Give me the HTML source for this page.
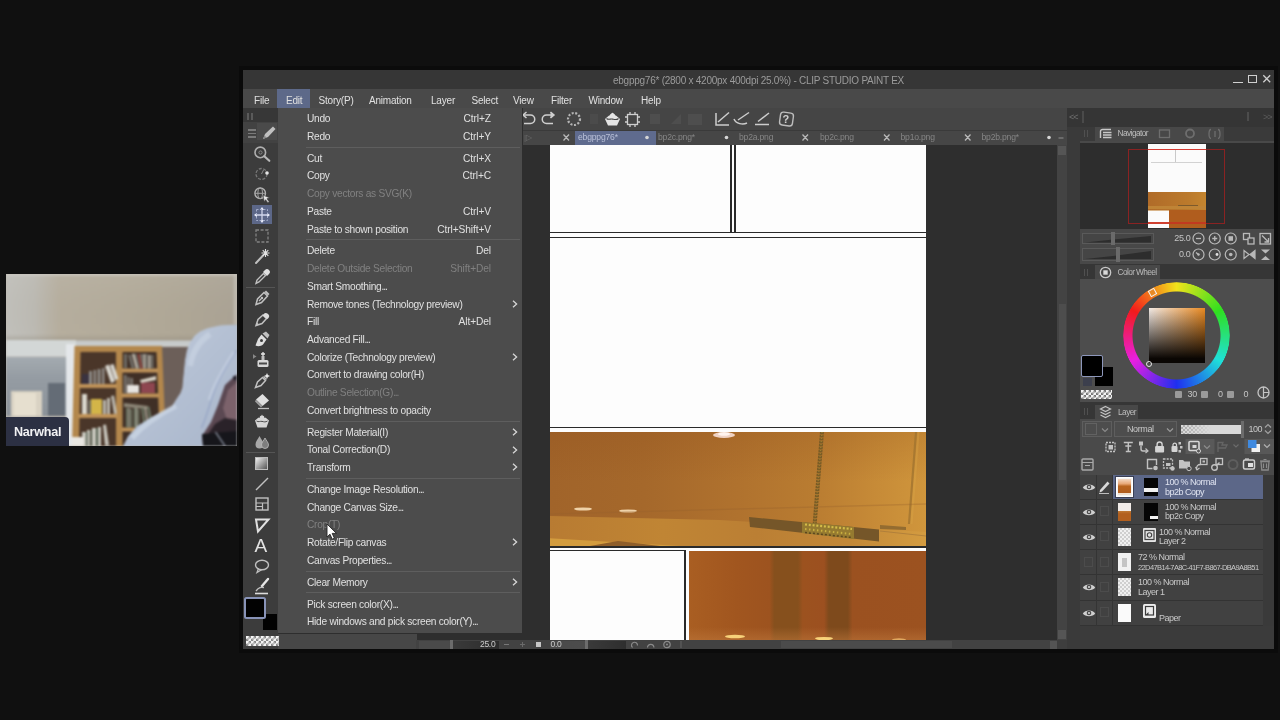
<!DOCTYPE html>
<html><head><meta charset="utf-8"><title>CLIP STUDIO PAINT EX</title>
<style>
*{box-sizing:border-box;margin:0;padding:0}
html,body{width:1280px;height:720px;overflow:hidden;background:#101010;font-family:"Liberation Sans",sans-serif;}
.a,.a *{position:absolute}
.t{white-space:nowrap;letter-spacing:-0.2px}
svg{overflow:visible}
body>.a{left:0;top:0;width:1280px;height:720px}
body>.a{filter:blur(0.4px)}

</style></head><body>
<!-- frame.html -->
<div class="a" id="frame">
<div style="left:239px;top:66px;width:1038.500px;height:587px;background:#0b0b0b"></div>
<div style="left:243px;top:70px;width:1031px;height:579px;background:#3d3d3d"></div>
<div style="left:243px;top:70px;width:1031px;height:19px;background:#363636"></div>
<div class="t" style="left:613px;top:74px;font-size:10px;line-height:14px;color:#9b9b9b;letter-spacing:-0.25px">ebgppg76* (2800 x 4200px 400dpi 25.0%) - CLIP STUDIO PAINT EX</div>
<div style="left:1274px;top:70px;width:3.500px;height:579px;background:#0a0a0a"></div><div style="left:239px;top:70px;width:4px;height:579px;background:#0a0a0a"></div>
<!-- window buttons -->
<div style="left:1232.500px;top:82px;width:10px;height:1.300px;background:#d2d2d2"></div>
<div style="left:1248px;top:74.500px;width:8.500px;height:8.500px;border:1.200px solid #cfcfcf"></div>
<svg style="left:1263px;top:75px" width="7.500" height="7.500" viewBox="0 0 7.500 7.500"><path d="M0.300 0.300L7.200 7.200M7.200 0.300L0.300 7.200" stroke="#cfcfcf" stroke-width="1.300"/></svg>
<!-- menubar -->
<div style="left:243px;top:89px;width:1031px;height:19px;background:#494949"></div>
<div style="left:277px;top:89px;width:33px;height:19px;background:#5d6989"></div>
<div id="mb" style="left:0;top:93.600px;font-size:10px;line-height:14px;color:#e0e0e0">
<span class="t" style="left:254px">File</span><span class="t" style="left:286px">Edit</span><span class="t" style="left:318.5px">Story(P)</span><span class="t" style="left:369px">Animation</span><span class="t" style="left:431px">Layer</span><span class="t" style="left:471.5px">Select</span><span class="t" style="left:513px">View</span><span class="t" style="left:551px">Filter</span><span class="t" style="left:588.5px">Window</span><span class="t" style="left:641px">Help</span>
</div>
<!-- command bar -->
<div style="left:278px;top:108px;width:789px;height:22px;background:#454545"></div>
<!-- tabs row -->
<div style="left:522px;top:130px;width:545px;height:16px;background:#3b3b3b"></div>
<!-- status bar -->
<div style="left:243px;top:634px;width:824px;height:15px;background:#3d3d3d"></div>
</div>

<!-- canvas.html -->
<div class="a" id="canvas">
<div style="left:279px;top:144.500px;width:778px;height:495.500px;background:#2e2e2e"></div>
<!-- paper -->
<div style="left:550px;top:145px;width:376px;height:495px;background:#fdfdfd"></div>
<!-- frame lines top -->
<div style="left:730px;top:145px;width:1.5px;height:87px;background:#2a2a2a"></div>
<div style="left:734px;top:145px;width:1.5px;height:87px;background:#2a2a2a"></div>
<div style="left:550px;top:231.5px;width:376px;height:1.5px;background:#2a2a2a"></div>
<div style="left:550px;top:236.5px;width:376px;height:1.5px;background:#2a2a2a"></div>
<div style="left:550px;top:426.5px;width:376px;height:1.5px;background:#2a2a2a"></div>
<!-- orange image 1 -->
<div style="left:550px;top:432px;width:376px;height:114px;overflow:hidden;background:linear-gradient(90deg,#a1642a 0%,#a5682b 25%,#b0722e 50%,#b97c31 70%,#c68a37 86%,#d0963c 100%)">
 <div style="left:0;top:0;width:376px;height:50px;background:linear-gradient(180deg,rgba(140,75,25,.22),rgba(140,75,25,0))"></div>
 <div style="left:0;top:76px;width:376px;height:38px;background:linear-gradient(90deg,#b87b32 0%,#c08534 30%,#bb7f34 55%,#c28838 80%,#d49c40 100%);clip-path:polygon(0 8px,45% 12px,100% 24px,100% 100%,0 100%)"></div>
 <div style="left:0;top:102px;width:130px;height:12px;background:#d39c3e;clip-path:polygon(0 35%,100% 100%,0 100%)"></div>
 <div style="left:40px;top:109px;width:70px;height:5px;background:#8f5e2a;clip-path:polygon(0 100%,40% 0,100% 100%)"></div>
 <svg style="left:0;top:0" width="376" height="114" viewBox="0 0 376 114">
  <ellipse cx="174" cy="3" rx="11" ry="3" fill="#f0d3c4"/>
  <ellipse cx="174" cy="2" rx="6" ry="1.800" fill="#fff4ee"/>
  <path d="M272 0L264.500 94" stroke="#7a5c26" stroke-width="4" stroke-dasharray="2.400 0.600"/>
  <path d="M272 0L264.500 94" stroke="#9c7c30" stroke-width="1.400" stroke-dasharray="1 2"/>
  <path d="M366 0L359 92" stroke="#a27530" stroke-width="2.200" opacity=".8"/><path d="M368.500 0L361.500 92" stroke="#dba848" stroke-width="2" opacity=".35"/>
  <path d="M199 85L329 97.500L329 109.500L200 95Z" fill="#755629"/>
  <path d="M252 90L304 95L304 107L252 101Z" fill="#957a30"/>
  <path d="M255 92.500L302 97" stroke="#d4bc48" stroke-width="2.200" stroke-dasharray="2 1.800"/>
  <path d="M255 97L302 102" stroke="#c9b040" stroke-width="2" stroke-dasharray="1.500 2.500"/>
  <path d="M255 100.500L302 105.500" stroke="#5c4720" stroke-width="1.500" stroke-dasharray="2 2"/>
  <path d="M330 93L356 95L356 98L330 97Z" fill="#946c30"/>
  <path d="M330 99L376 104" stroke="#a6783a" stroke-width="1.200" opacity=".7"/>
  <ellipse cx="33" cy="77" rx="9" ry="1.600" fill="#efd2a8"/>
  <ellipse cx="78" cy="79" rx="9" ry="1.600" fill="#efd2a8"/>
  <path d="M0 82L376 72" stroke="#96602b" stroke-width="1.500" opacity=".3"/>
 </svg>
</div>
<div style="left:550px;top:546px;width:376px;height:1.5px;background:#2a2a2a"></div>
<div style="left:550px;top:550px;width:136px;height:1.2px;background:#2a2a2a"></div>
<div style="left:684px;top:550px;width:1.6px;height:90px;background:#2a2a2a"></div>
<!-- orange image 2 -->
<div style="left:689px;top:550.5px;width:237px;height:89.5px;overflow:hidden;background:linear-gradient(90deg,#a95e22 0%,#a1561f 20%,#9d531f 34%,#86501d 36%,#86501d 46%,#9c521f 48%,#9c5020 57%,#7e4a1c 59%,#7e4a1c 67%,#9b5120 69%,#9c5220 100%)">
 <div style="left:0;top:76px;width:237px;height:14px;background:linear-gradient(180deg,rgba(190,120,60,0),rgba(190,120,60,.55))"></div>
 <svg style="left:0;top:0" width="237" height="90" viewBox="0 0 237 90">
  <ellipse cx="46" cy="85.5" rx="10" ry="1.8" fill="#f7d27a"/>
  <ellipse cx="135" cy="87.5" rx="9" ry="1.6" fill="#f7d27a"/>
  <ellipse cx="210" cy="88.5" rx="7" ry="1.2" fill="#e0a860"/>
 </svg>
</div>
<!-- scrollbars -->
<div style="left:1057px;top:144.500px;width:10px;height:495.500px;background:#434343"></div>
<div style="left:1058px;top:145.500px;width:8px;height:9px;background:#555"></div>
<div style="left:1058.500px;top:304px;width:7px;height:176px;background:#4d4d4d"></div>
<div style="left:1058px;top:630px;width:8px;height:9px;background:#555"></div>
</div>

<!-- cmd.html -->
<div class="a" id="cmd">
<!-- cmd icons -->
<svg style="left:520px;top:110px" width="280" height="18" viewBox="0 0 280 18">
 <g fill="none" stroke="#cfcfcf" stroke-width="1.500">
  <path d="M4 5h6.500a4 4 0 0 1 0 8.500H4"/><path d="M6.500 2L3 5l3.500 3" />
  <path d="M33 5h-6.500a4 4 0 0 0 0 8.500H33"/><path d="M30.500 2L34 5l-3.500 3" fill="#cfcfcf"/>
 </g>
 <circle cx="54" cy="9" r="6" fill="none" stroke="#b5b5b5" stroke-width="2.200" stroke-dasharray="2 1.600"/>
 <rect x="70" y="4" width="8" height="10" fill="#4b4b4b"/>
 <path d="M85 9L92.500 2.500l7.500 6.500l-3 6.500h-9Z" fill="#e4e4e4"/><path d="M86.500 8.500c2 1.600 4 .2 6 .6s4 1.200 6-.6" fill="none" stroke="#454545" stroke-width="1.100"/><path d="M89 5.500a3.500 3.500 0 0 1 7 0" fill="none" stroke="#454545" stroke-width="1"/>
 <g stroke="#cfcfcf" stroke-width="1.300" fill="none"><rect x="107.500" y="4.500" width="10" height="10"/><path d="M105 7h2.500M117.500 7h2.500M105 12h2.500M117.500 12h2.500M110 2v2.500M115 2v2.500M110 14.500v2.500M115 14.500v2.500"/></g>
 <g fill="#4e4e4e"><rect x="130" y="4" width="10" height="10"/><path d="M151 14l10-10v10Z"/><rect x="168" y="4" width="14" height="11"/></g>
 <g stroke="#cdcdcd" stroke-width="1.500" fill="none">
  <path d="M196 3v12h13"/><path d="M198 12L209 2.500"/>
  <path d="M214 9c2 5 9 6 13 4"/><path d="M218 10L229 2.500"/>
  <path d="M235 14.500h14"/><path d="M238 11.500L249 3"/>
 </g>
 <rect x="260" y="2.500" width="13" height="13" rx="3" fill="none" stroke="#bdbdbd" stroke-width="1.400" transform="rotate(8 266 9)"/>
</svg>
<div class="t" style="left:782.500px;top:112px;font-size:11px;line-height:14px;color:#d0d0d0;font-weight:bold;letter-spacing:0">?</div>
<!-- right end of cmd bar -->
<div style="left:1067px;top:108px;width:207px;height:19px;background:#353535"></div>
<div style="left:1067px;top:127px;width:13px;height:522px;background:#3a3a3a"></div>
<div class="t" style="left:1069px;top:110px;font-size:9px;line-height:14px;color:#6f6f6f;letter-spacing:-1px">&lt;&lt;</div>
<div class="t" style="left:1263px;top:110px;font-size:9px;line-height:14px;color:#5c5c5c;letter-spacing:-1px">&gt;&gt;</div>
<div style="left:1082px;top:111px;width:2px;height:12px;background:#4a4a4a"></div>
<div style="left:1247px;top:112px;width:1.500px;height:9px;background:#4c4c4c"></div>
<!-- tabs -->
<div style="left:522px;top:130px;width:545px;height:14.500px;background:#464646"></div>
<div style="left:522px;top:130px;width:545px;height:1px;background:#3a3a3a"></div>
<div style="left:575px;top:130.500px;width:80.500px;height:14px;background:#5f6b8e"></div>
<div id="tabt" style="left:0;top:131px;font-size:8.600px;line-height:13px;color:#858585">
<span class="t" style="left:524px;color:#6a6a6a;font-size:8px">|▷</span>
<span class="t" style="left:578px;color:#b9c0d8">ebgppg76*</span>
<span class="t" style="left:658px">bp2c.png*</span>
<span class="t" style="left:739px">bp2a.png</span>
<span class="t" style="left:820px">bp2c.png</span>
<span class="t" style="left:900.500px">bp1o.png</span>
<span class="t" style="left:981.500px">bp2b.png*</span>
</div>
<svg style="left:522px;top:129.700px" width="545" height="16" viewBox="0 0 545 16">
 <g stroke="#b8b8b8" stroke-width="1.300"><path d="M41.500 4.500l5.500 6M47 4.500l-5.500 6M280.500 4.500l5.500 6M286 4.500l-5.500 6M362 4.500l5.500 6M367.500 4.500l-5.500 6M443 4.500l5.500 6M448.500 4.500l-5.500 6"/></g>
 <g fill="#d6d6d6"><circle cx="125" cy="7.500" r="1.800"/><circle cx="204.500" cy="7.500" r="1.800"/><circle cx="527" cy="7.500" r="1.800"/></g>
 <path d="M536.500 8h5" stroke="#808080" stroke-width="1.300"/>
</svg>
</div>

<!-- status.html -->
<div class="a" id="status">
<div style="left:277.500px;top:633px;width:139px;height:16px;background:#474747"></div>
<div style="left:416px;top:639.500px;width:651px;height:9.500px;background:#424242"></div>
<div style="left:781px;top:640.500px;width:171px;height:7.500px;background:#4b4b4b"></div>
<div style="left:418.500px;top:640.500px;width:80px;height:8px;background:linear-gradient(90deg,#4a4a4a 0,#4a4a4a 38%,#3a3a3a 42%,#2c2c2c 100%)"></div>
<div style="left:450px;top:640px;width:2.500px;height:9px;background:#6c6c6c"></div>
<div class="t" style="left:480px;top:638.500px;font-size:8.500px;line-height:11px;color:#cdcdcd;letter-spacing:-0.300px">25.0</div>
<div style="left:503.500px;top:644px;width:5px;height:1.300px;background:#777"></div>
<div style="left:520px;top:644px;width:5px;height:1.300px;background:#6a6a6a"></div><div style="left:521.850px;top:642px;width:1.300px;height:5px;background:#6a6a6a"></div>
<div style="left:536px;top:642px;width:5px;height:5px;background:#c6c6c6"></div>
<div style="left:549.500px;top:640.500px;width:76px;height:8px;background:linear-gradient(90deg,#4a4a4a 0,#4c4c4c 46%,#3a3a3a 50%,#2e2e2e 100%)"></div>
<div style="left:585px;top:640px;width:2.500px;height:9px;background:#6c6c6c"></div>
<div class="t" style="left:550.500px;top:638.500px;font-size:8.500px;line-height:11px;color:#cdcdcd;letter-spacing:-0.300px">0.0</div>
<svg style="left:628px;top:640px" width="60" height="9" viewBox="0 0 60 9"><g fill="none" stroke="#8a8a8a" stroke-width="1.200"><path d="M4.500 7.500a3 3 0 1 1 5 -2"/><path d="M19.500 7.500a3.200 3.200 0 1 1 6.400 0"/><circle cx="39" cy="4.500" r="3.200"/></g><circle cx="39" cy="4.500" r="1" fill="#8a8a8a"/><path d="M53 1v7" stroke="#5c5c5c" stroke-width="1.300"/></svg>
<div style="left:1049.500px;top:640.500px;width:7.500px;height:8px;background:#545454"></div>
<div style="left:1057px;top:639.500px;width:10px;height:9.500px;background:#3e3e3e"></div>
</div>

<!-- tools.html -->
<div class="a" id="tools">
<div style="left:243px;top:108px;width:34.5px;height:541px;background:#3c3c3c"></div>
<div style="left:243px;top:108px;width:34.5px;height:14px;background:#373737"></div>
<div style="left:247px;top:113px;width:2px;height:7px;background:#5a5a5a"></div><div style="left:250.5px;top:113px;width:2px;height:7px;background:#5a5a5a"></div>
<div style="left:243px;top:122px;width:34.5px;height:21px;background:#424242"></div>
<div style="left:257px;top:123px;width:20px;height:17px;background:#4a4a4a"></div>
<div style="left:248px;top:129px;width:8px;height:1.5px;background:#7a7a7a"></div><div style="left:248px;top:132.5px;width:8px;height:1.5px;background:#7a7a7a"></div><div style="left:248px;top:136px;width:8px;height:1.5px;background:#7a7a7a"></div>
<svg style="left:259.5px;top:124.0px" width="18" height="18" viewBox="0 0 18 18"><path d="M3 15L5 10L13 2.5L15.5 5L8 13Z" fill="#c0c0c0"/><path d="M3 15L4.5 11.5L6.5 13.5Z" fill="#888"/></svg>
<svg style="left:253.0px;top:145.0px" width="18" height="18" viewBox="0 0 18 18"><circle cx="7.300" cy="7.400" r="5.300" fill="none" stroke="#aeaeae" stroke-width="1.600"/><path d="M11.300 11.300L16.300 15.800" stroke="#b8b8b8" stroke-width="2.200" stroke-linecap="round"/><circle cx="7.5" cy="7.5" r="1.6" fill="none" stroke="#8a8a8a" stroke-width="1"/></svg>
<svg style="left:253.0px;top:165.0px" width="18" height="18" viewBox="0 0 18 18"><circle cx="8.5" cy="9" r="5.5" fill="none" stroke="#787878" stroke-width="1.3" stroke-dasharray="3 1.5"/><circle cx="14" cy="8" r="1.8" fill="#e6e6e6"/><path d="M8.5 9L10.5 5" stroke="#8a8a8a" stroke-width="1"/></svg>
<svg style="left:253.0px;top:185.0px" width="18" height="18" viewBox="0 0 18 18"><circle cx="7.200" cy="8.300" r="5.300" fill="none" stroke="#b4b4b4" stroke-width="1.400"/><ellipse cx="7.200" cy="8.300" rx="2.300" ry="5.300" fill="none" stroke="#a4a4a4" stroke-width="1"/><path d="M2 8.300h10.400" stroke="#a4a4a4" stroke-width="1"/><path d="M10.200 10.200l6.300 2.600l-2.600 1l2.300 3l-1.300 1l-2.300-3.100l-1.500 1.900Z" fill="#e6e6e6" stroke="#404040" stroke-width=".6"/></svg>
<div style="left:252px;top:205px;width:20px;height:19px;background:#5c6788"></div>
<svg style="left:253.0px;top:205.5px" width="18" height="18" viewBox="0 0 18 18"><path d="M9 2v14M2 9h14" stroke="#cfd5ea" stroke-width="1.3"/><path d="M9 1l2.2 3h-4.4ZM9 17l2.2-3h-4.4ZM1 9l3-2.2v4.4ZM17 9l-3-2.2v4.4Z" fill="#e4e8f6"/><rect x="3.5" y="3.5" width="11" height="11" fill="none" stroke="#aab3d0" stroke-width=".9" stroke-dasharray="2 1.5"/></svg>
<svg style="left:253.0px;top:226.5px" width="18" height="18" viewBox="0 0 18 18"><rect x="3" y="3" width="12" height="12" fill="none" stroke="#828282" stroke-width="1.3" stroke-dasharray="3 1.6"/></svg>
<svg style="left:253.0px;top:247.0px" width="18" height="18" viewBox="0 0 18 18"><path d="M3 16L10.5 8" stroke="#c0c0c0" stroke-width="2" stroke-linecap="round"/><path d="M12.5 2v8M8.5 6h8M9.7 3.2l5.6 5.6M15.3 3.2l-5.6 5.6" stroke="#e2e2e2" stroke-width="1.1"/></svg>
<svg style="left:253.0px;top:267.5px" width="18" height="18" viewBox="0 0 18 18"><path d="M3 15.5L4 12L10.5 5.5L12.5 7.5L6 14Z" fill="none" stroke="#c0c0c0" stroke-width="1.4"/><path d="M10 4l4 4l2-2a2.4 2.4 0 0 0-4-4Z" fill="#e0e0e0"/></svg>
<div style="left:246px;top:287px;width:29px;height:1px;background:#555"></div>
<svg style="left:253.0px;top:289.0px" width="18" height="18" viewBox="0 0 18 18"><path d="M3 15.5L4.5 10L11 3.5L14.5 7L8.5 13.5Z" fill="none" stroke="#c0c0c0" stroke-width="1.5"/><path d="M6 12l3-3" stroke="#c0c0c0" stroke-width="1.2"/><circle cx="9" cy="9" r="1.2" fill="#c0c0c0"/><path d="M11.5 3L13 1.5L16.5 5L15 6.5Z" fill="#c0c0c0"/></svg>
<svg style="left:253.0px;top:309.5px" width="18" height="18" viewBox="0 0 18 18"><path d="M3 15.5L5 9.5L10 5L13.5 8.5L9 13.5Z" fill="none" stroke="#c0c0c0" stroke-width="1.5"/><path d="M10.5 4.5a3 3 0 0 1 5 3.5l-1.5 1.2l-4.5-4Z" fill="#dcdcdc"/><path d="M3 15.5l1-3l2 2Z" fill="#c0c0c0"/></svg>
<svg style="left:253.0px;top:330.0px" width="18" height="18" viewBox="0 0 18 18"><path d="M9.5 3.5L13 1.5L16.5 5L14.5 8.5Z" fill="#c0c0c0"/><path d="M8.5 4.5L13.5 9.5L10 14.5C8 16.5 4.5 16.5 2.5 15.5L5 9Z" fill="#dedede"/><circle cx="8.5" cy="10.5" r="1.5" fill="#3c3c3c"/></svg>
<svg style="left:253.0px;top:351.0px" width="18" height="18" viewBox="0 0 18 18"><rect x="4.5" y="9" width="11" height="7" rx="1.5" fill="#d8d8d8"/><rect x="6" y="11.5" width="8" height="2" fill="#4a4a4a"/><rect x="8.5" y="5" width="3" height="4" fill="#c0c0c0"/><path d="M10 1v4M8 3h4" stroke="#e8e8e8" stroke-width="1.3"/><path d="M1 4l2.5 1.5L1 7Z" fill="#8a8a8a"/><path d="M0.5 3.5v4" stroke="#8a8a8a" stroke-width="1"/></svg>
<svg style="left:253.0px;top:371.5px" width="18" height="18" viewBox="0 0 18 18"><path d="M2.5 15.5L4.5 10L9.5 5.5L12.5 8.5L8 13.5Z" fill="none" stroke="#c0c0c0" stroke-width="1.5"/><path d="M10.5 4.5l3 3" stroke="#c0c0c0" stroke-width="1.5"/><path d="M14 1l.9 2.1L17 4l-2.1.9L14 7l-.9-2.1L11 4l2.100-.9Z" fill="#eaeaea"/></svg>
<svg style="left:253.0px;top:391.5px" width="18" height="18" viewBox="0 0 18 18"><path d="M9.500 2L16 8.500L9.500 14L3 7.500Z" fill="#e0e0e0"/><path d="M3 7.500L9.500 14L8 15.500L2 9.500Z" fill="#9c9c9c"/><path d="M5 16.500h11" stroke="#c0c0c0" stroke-width="1.3"/></svg>
<svg style="left:253.0px;top:412.0px" width="18" height="18" viewBox="0 0 18 18"><path d="M2 8.500L9 2.500l7 6l-2.500 7H4.500Z" fill="#d6d6d6"/><path d="M6 6a3 3.200 0 0 1 6 0" fill="none" stroke="#404040" stroke-width="1.100"/><path d="M3.500 9c2 1.400 3.600 0 5.500.400s3.600 1 5.500-.400" fill="none" stroke="#404040" stroke-width=".9"/></svg>
<svg style="left:253.0px;top:432.5px" width="18" height="18" viewBox="0 0 18 18"><path d="M6.500 3C8 6 10.500 8.500 10.500 11.500a4 4 0 0 1-8 0C2.500 8.500 5 6 6.500 3Z" fill="#a8a8a8"/><path d="M12 5c1.200 2.500 3.500 4.500 3.500 7a3.500 3.500 0 0 1-7 0c0-2.500 2.300-4.500 3.500-7Z" fill="#7e7e7e" stroke="#bdbdbd" stroke-width=".8"/></svg>
<div style="left:246px;top:452px;width:29px;height:1px;background:#555"></div>
<div style="left:255px;top:456.500px;width:13px;height:13px;background:linear-gradient(135deg,#f0f0f0,#555);border:1px solid #bdbdbd"></div>
<svg style="left:253.0px;top:474.5px" width="18" height="18" viewBox="0 0 18 18"><path d="M3 15L15 3" stroke="#c0c0c0" stroke-width="1.500"/></svg>
<svg style="left:253.0px;top:495.0px" width="18" height="18" viewBox="0 0 18 18"><rect x="3" y="3" width="12" height="12" fill="none" stroke="#c0c0c0" stroke-width="1.400"/><path d="M3 8h12M9.500 8v7M3 11.500h6.500" stroke="#c0c0c0" stroke-width="1.200"/></svg>
<svg style="left:253.0px;top:515.5px" width="18" height="18" viewBox="0 0 18 18"><path d="M3 3.500h12.500L5 15.500Z" fill="none" stroke="#e0e0e0" stroke-width="2"/></svg>
<div class="t" style="left:254.500px;top:536px;font-size:19px;line-height:19px;color:#e4e4e4;letter-spacing:0">A</div>
<svg style="left:253.0px;top:556.5px" width="18" height="18" viewBox="0 0 18 18"><ellipse cx="9" cy="8" rx="6.500" ry="4.800" fill="none" stroke="#c0c0c0" stroke-width="1.400"/><path d="M5.500 11.500L4 15.500L9 12.500" fill="none" stroke="#c0c0c0" stroke-width="1.300"/></svg>
<svg style="left:253.0px;top:576.5px" width="18" height="18" viewBox="0 0 18 18"><path d="M9 9L15 2" stroke="#e6e6e6" stroke-width="2.400" stroke-linecap="round"/><path d="M3 14c3-4 5-4 8-3.500" fill="none" stroke="#c0c0c0" stroke-width="1.300"/><path d="M2 16.500h13" stroke="#dcdcdc" stroke-width="1.600"/></svg>
<div style="left:263px;top:613.500px;width:14px;height:16.500px;background:#020202"></div>
<div style="left:244px;top:596.500px;width:21.500px;height:22px;background:#020202;border:2px solid #8893b8;border-radius:2.500px"></div>
<div style="left:246px;top:636px;width:33px;height:9.500px;background-color:#f4f4f4;background-image:linear-gradient(45deg,#8a8a8a 25%,transparent 25%,transparent 75%,#8a8a8a 75%),linear-gradient(45deg,#8a8a8a 25%,transparent 25%,transparent 75%,#8a8a8a 75%);background-size:5px 5px;background-position:0 0,2.500px 2.500px"></div>
</div>

<!-- right.html -->
<div class="a" id="right">
<div style="left:1080px;top:127px;width:194px;height:522px;background:#3a3a3a"></div>
<div style="left:1095px;top:126.500px;width:129px;height:14px;background:#484848"></div>
<div style="left:1080px;top:140.500px;width:194px;height:2.500px;background:#494949"></div>
<div style="left:1080px;top:143px;width:194px;height:85.500px;background:#2d2d2d"></div>
<div style="left:1084px;top:130px;width:4px;height:7px;border-left:1.500px solid #505050;border-right:1.500px solid #505050"></div>
<svg style="left:1099px;top:127.500px" width="14" height="12" viewBox="0 0 14 12"><path d="M1.500 10V3.500a2 2 0 0 1 2-2H12" fill="none" stroke="#c8c8c8" stroke-width="1.400"/><path d="M4 4.500h8.500M4 7h8.500M4 9.500h8.500" stroke="#c8c8c8" stroke-width="1.300"/></svg>
<div class="t" style="left:1117.500px;top:127px;font-size:8.300px;line-height:13px;color:#bdbdbd;letter-spacing:-0.550px">Navigator</div>
<svg style="left:1158px;top:128px" width="66" height="12" viewBox="0 0 66 12"><rect x="1.500" y="2" width="10" height="7.500" fill="none" stroke="#6e6e6e" stroke-width="1.300"/><circle cx="32" cy="5.500" r="4" fill="none" stroke="#6e6e6e" stroke-width="1.800"/><path d="M53 1.500c-2 0-2 4-2 4.500s0 4.500 2 4.500M60 1.500c2 0 2 4 2 4.500s0 4.500-2 4.500M57 3v6" fill="none" stroke="#6e6e6e" stroke-width="1.300"/></svg>
<div style="left:1148px;top:143.500px;width:57.500px;height:84.500px;background:#fbfbfb"></div>
<div style="left:1175px;top:149px;width:1px;height:13px;background:#c9c9c9"></div>
<div style="left:1151px;top:161.500px;width:51px;height:1px;background:#d2d2d2"></div>
<div style="left:1148px;top:191.500px;width:57.500px;height:18px;background:linear-gradient(90deg,#b06b28,#bb7a2c 70%,#c4852f)"></div>
<div style="left:1148px;top:205.500px;width:57.500px;height:3.500px;background:#bf8436"></div><div style="left:1178px;top:204.500px;width:20px;height:1.800px;background:#7d5a2c"></div>
<div style="left:1169px;top:209.500px;width:36.500px;height:18.500px;background:#b05d1e"></div>
<div style="left:1148px;top:209.500px;width:21px;height:1px;background:#d9b58a"></div>
<div style="left:1128px;top:148.500px;width:97px;height:75px;border:1.200px solid #8a2222"></div>
<div style="left:1148px;top:148.500px;width:57.500px;height:1.400px;background:#d63a32"></div>
<div style="left:1148px;top:222.300px;width:21px;height:1.300px;background:#d04030"></div><div style="left:1169px;top:222.300px;width:36.500px;height:1.300px;background:#c23a20"></div>
<div style="left:1080px;top:228.500px;width:194px;height:35.500px;background:#484848"></div>
<div style="left:1082px;top:232.5px;width:72px;height:11.5px;background:#454545;border:1px solid #5a5a5a"></div>
<svg style="left:1083px;top:233.5px" width="70" height="9.5" viewBox="0 0 70 9.5" preserveAspectRatio="none"><path d="M2 8.5L30 5.5L68 2V8.5Z" fill="#2d2d2d"/></svg>
<div style="left:1111.0px;top:231.5px;width:3.500px;height:13.5px;background:#6a6a6a"></div>
<div style="left:1082px;top:247.5px;width:72px;height:13px;background:#454545;border:1px solid #5a5a5a"></div>
<svg style="left:1083px;top:248.5px" width="70" height="11" viewBox="0 0 70 11" preserveAspectRatio="none"><path d="M2 10L30 7L68 2V10Z" fill="#2d2d2d"/></svg>
<div style="left:1116.0px;top:246.5px;width:3.500px;height:15px;background:#6a6a6a"></div>
<div class="t" style="right:89.500px;top:232px;font-size:9px;line-height:13px;color:#c4c4c4;letter-spacing:-0.300px">25.0</div>
<div class="t" style="right:89.500px;top:248px;font-size:9px;line-height:13px;color:#c4c4c4;letter-spacing:-0.300px">0.0</div>
<svg style="left:1190px;top:230px" width="84" height="34" viewBox="0 0 84 34"><circle cx="8.5" cy="8.5" r="5.500" fill="none" stroke="#b9b9b9" stroke-width="1.200"/><circle cx="24.75" cy="8.5" r="5.500" fill="none" stroke="#b9b9b9" stroke-width="1.200"/><circle cx="40.75" cy="8.5" r="5.500" fill="none" stroke="#b9b9b9" stroke-width="1.200"/><circle cx="8.5" cy="24.5" r="5.500" fill="none" stroke="#b9b9b9" stroke-width="1.200"/><circle cx="24.75" cy="24.5" r="5.500" fill="none" stroke="#b9b9b9" stroke-width="1.200"/><circle cx="40.75" cy="24.5" r="5.500" fill="none" stroke="#b9b9b9" stroke-width="1.200"/><path d="M6 8.500h5" stroke="#b9b9b9" stroke-width="1.300"/><path d="M22.250 8.500h5M24.750 6v5" stroke="#b9b9b9" stroke-width="1.300"/><rect x="38.500" y="6.200" width="4.500" height="4.600" fill="#b9b9b9"/><rect x="53.500" y="3.500" width="6" height="6" fill="none" stroke="#b9b9b9" stroke-width="1.300"/><rect x="58" y="8" width="6" height="6" fill="#484848" stroke="#b9b9b9" stroke-width="1.300"/><rect x="70" y="3.500" width="10.500" height="10.500" fill="none" stroke="#b9b9b9" stroke-width="1.300"/><path d="M72 5.500l6.500 6.500M78.500 8v4h-4" stroke="#b9b9b9" stroke-width="1.300" fill="none"/><path d="M6 22.500l3 2.500" stroke="#b9b9b9" stroke-width="1.300"/><circle cx="8.500" cy="24.500" r="1.200" fill="#b9b9b9"/><circle cx="27" cy="24.500" r="1.400" fill="#e0e0e0"/><circle cx="40.750" cy="24.500" r="1.800" fill="#b9b9b9"/><path d="M54 20.500l5 4l-5 4ZM65 20.500l-5 4l5 4Z" fill="none" stroke="#b9b9b9" stroke-width="1.200"/><path d="M65 20.500l-5 4l5 4Z" fill="#b9b9b9"/><path d="M71 19.500h9l-4.500 4ZM71 30h9l-4.500-4Z" fill="#b9b9b9"/></svg>
<div style="left:1080px;top:264px;width:194px;height:15px;background:#363636"></div>
<div style="left:1095px;top:265px;width:65px;height:14px;background:#484848"></div>
<div style="left:1084px;top:268.500px;width:4px;height:7px;border-left:1.500px solid #505050;border-right:1.500px solid #505050"></div>
<svg style="left:1099px;top:265.500px" width="13" height="13" viewBox="0 0 13 13"><circle cx="6.500" cy="6.500" r="5.200" fill="none" stroke="#c8c8c8" stroke-width="1.300"/><rect x="4.300" y="4.300" width="4.400" height="4.400" fill="#d8d8d8"/></svg>
<div class="t" style="left:1117.500px;top:265.500px;font-size:8.300px;line-height:13px;color:#bdbdbd;letter-spacing:-0.600px">Color Wheel</div>
<div style="left:1080px;top:279px;width:194px;height:123px;background:#4d4d4d"></div>
<div style="left:1123px;top:282px;width:107px;height:107px;border-radius:50%;background:conic-gradient(from -60deg,#f21b1b,#f2e21b 16.660%,#2fe01f 33.330%,#1fe0d8 50%,#1f2ff0 66.660%,#e81fe0 83.330%,#f21b1b);-webkit-mask:radial-gradient(circle,transparent 43.500px,#000 44.500px,#000 52.800px,transparent 53.800px);mask:radial-gradient(circle,transparent 43.500px,#000 44.500px,#000 52.800px,transparent 53.800px)"></div>
<div style="left:1149px;top:308px;width:56px;height:55px;background:linear-gradient(180deg,rgba(0,0,0,0) 0%,#0a0603 92%),linear-gradient(90deg,#f3ebe6,#e98a22)"></div>
<div style="left:1148.500px;top:289px;width:7px;height:7px;border:1.200px solid #f4f4f4;background:#e88a26;transform:rotate(-29deg)"></div>
<div style="left:1145.500px;top:360.500px;width:6px;height:6px;border:1.200px solid #e8e8e8;border-radius:50%"></div>
<div style="left:1094.500px;top:367px;width:18px;height:18.500px;background:#000"></div>
<div style="left:1080.500px;top:355px;width:22px;height:21.500px;background:#000;border:1.800px solid #8d97bb;border-radius:2px"></div>
<div style="left:1083px;top:378px;width:9px;height:8px;background:#3c3f4d"></div>
<div style="left:1081px;top:390px;width:31px;height:9px;background-color:#f4f4f4;background-image:linear-gradient(45deg,#777 25%,transparent 25%,transparent 75%,#777 75%),linear-gradient(45deg,#777 25%,transparent 25%,transparent 75%,#777 75%);background-size:5px 5px;background-position:0 0,2.500px 2.500px"></div>
<div style="left:1175px;top:391px;width:7px;height:7px;background:#9a9a9a;border-radius:1px"></div><div style="left:1201px;top:391px;width:7px;height:7px;background:#9a9a9a;border-radius:1px"></div><div style="left:1226.5px;top:391px;width:7px;height:7px;background:#9a9a9a;border-radius:1px"></div>
<div class="t" style="left:1187.500px;top:388px;font-size:9px;line-height:13px;color:#c4c4c4;letter-spacing:-0.200px">30</div><div class="t" style="left:1218px;top:388px;font-size:9px;line-height:13px;color:#c4c4c4">0</div><div class="t" style="left:1243.500px;top:388px;font-size:9px;line-height:13px;color:#c4c4c4">0</div>
<svg style="left:1256.500px;top:385.500px" width="13" height="13" viewBox="0 0 13 13"><circle cx="6.500" cy="6.500" r="5.500" fill="none" stroke="#c4c4c4" stroke-width="1.300"/><path d="M6.500 1v11M6.500 6.500h5.500" stroke="#c4c4c4" stroke-width="1.200"/></svg>
<div style="left:1080px;top:402px;width:194px;height:17px;background:#363636"></div>
<div style="left:1094.500px;top:404.500px;width:43.500px;height:14.500px;background:#484848"></div>
<div style="left:1084px;top:408px;width:4px;height:7px;border-left:1.500px solid #505050;border-right:1.500px solid #505050"></div>
<svg style="left:1099px;top:405px" width="13" height="14" viewBox="0 0 13 14"><path d="M6.500 1.500l5 2.500l-5 2.500l-5-2.500Z" fill="none" stroke="#c4c4c4" stroke-width="1.200"/><path d="M1.500 7l5 2.500l5-2.500M1.500 10l5 2.500l5-2.500" fill="none" stroke="#c4c4c4" stroke-width="1.200"/></svg>
<div class="t" style="left:1118px;top:405.500px;font-size:8.300px;line-height:13px;color:#bdbdbd;letter-spacing:-0.550px">Layer</div>
<div style="left:1080px;top:419px;width:194px;height:55.500px;background:#4a4a4a"></div>
<div style="left:1081.500px;top:421px;width:30.500px;height:16px;border:1px solid #5e5e5e;background:#4d4d4d"></div>
<div style="left:1084.500px;top:423px;width:12px;height:12px;border:1px solid #626262"></div>
<svg style="left:1101px;top:426.500px" width="8" height="6" viewBox="0 0 8 6"><path d="M1 1.500l3 3l3-3" fill="none" stroke="#8a8a8a" stroke-width="1.200"/></svg>
<div style="left:1114px;top:421px;width:63px;height:16px;border:1px solid #5e5e5e;background:#4d4d4d"></div>
<div class="t" style="left:1127px;top:422.500px;font-size:9px;line-height:13px;color:#c8c8c8;letter-spacing:-0.400px">Normal</div>
<svg style="left:1166px;top:426.500px" width="8" height="6" viewBox="0 0 8 6"><path d="M1 1.500l3 3l3-3" fill="none" stroke="#9a9a9a" stroke-width="1.200"/></svg>
<div style="left:1181px;top:425px;width:60px;height:8.500px;background:#d9d9d9"></div>
<div style="left:1181px;top:425px;width:30px;height:8.500px;background-image:linear-gradient(45deg,#a8a8a8 25%,transparent 25%,transparent 75%,#a8a8a8 75%),linear-gradient(45deg,#a8a8a8 25%,transparent 25%,transparent 75%,#a8a8a8 75%);background-size:4px 4px;background-position:0 0,2px 2px;-webkit-mask:linear-gradient(90deg,#000,transparent);mask:linear-gradient(90deg,#000,transparent)"></div>
<div style="left:1241px;top:420.500px;width:2.500px;height:17px;background:#6c6c6c"></div>
<div class="t" style="left:1248.500px;top:422.500px;font-size:9px;line-height:13px;color:#c8c8c8;letter-spacing:-0.500px">100</div>
<svg style="left:1263.500px;top:423px" width="8" height="12" viewBox="0 0 8 12"><path d="M1 4.500l3-3l3 3M1 7.500l3 3l3-3" fill="none" stroke="#a0a0a0" stroke-width="1.200"/></svg>
<svg style="left:1080px;top:438px" width="194" height="17" viewBox="0 0 194 17"><g transform="translate(24.5 2.0)"><rect x="1.500" y="2.500" width="9" height="9" fill="none" stroke="#c2c2c2" stroke-width="1.300" stroke-dasharray="2 1"/><rect x="4" y="5" width="4.500" height="4.500" fill="#c2c2c2"/></g><g transform="translate(41.799999999999955 2.0)"><path d="M2 2.500h9M3.500 6h6M6.500 2.500v9M4 11.500h5" stroke="#c2c2c2" stroke-width="1.400" fill="none"/></g><g transform="translate(57.0 2.0)"><rect x="2" y="1.500" width="4" height="4" fill="#c2c2c2"/><path d="M4 5.500v3.500a2 2 0 0 0 2 2h4" fill="none" stroke="#c2c2c2" stroke-width="1.400"/><path d="M8.500 8.500l2.500 2.500l-2.500 2" fill="none" stroke="#c2c2c2" stroke-width="1.200"/></g><g transform="translate(73.09999999999991 2.0)"><rect x="2" y="6" width="9" height="6.500" rx="1" fill="#d4d4d4"/><path d="M4 6V4.500a2.500 2.500 0 0 1 5 0V6" fill="none" stroke="#d4d4d4" stroke-width="1.400"/></g><g transform="translate(89.5 2.0)"><rect x="2" y="6" width="6" height="6" rx="1" fill="#d4d4d4"/><path d="M3.500 6V4.500a1.800 1.800 0 0 1 3.500 0V6" fill="none" stroke="#d4d4d4" stroke-width="1.200"/><rect x="9" y="2" width="2.500" height="2.500" fill="#c2c2c2"/><rect x="10.500" y="6" width="2.500" height="2.500" fill="#c2c2c2"/><rect x="9" y="10" width="2.500" height="2.500" fill="#c2c2c2"/></g><rect x="105.500" y="1" width="29" height="15" fill="#595959"/><g transform="translate(107.5 2.0)"><rect x="1.500" y="1.500" width="10" height="9" rx="1" fill="none" stroke="#d6d6d6" stroke-width="1.600"/><rect x="5" y="5" width="4" height="3" fill="#d6d6d6"/><circle cx="11" cy="11" r="2" fill="#595959" stroke="#d6d6d6" stroke-width="1"/></g><path d="M124 7.500l3 3l3-3" fill="none" stroke="#8c8c8c" stroke-width="1.200"/><g transform="translate(136.0 2.0)"><path d="M2 2v10M2 2.500h5l-1 2.500h5l-1.500 3h-7" fill="none" stroke="#656565" stroke-width="1.300"/></g><path d="M153.500 6.500l2.500 2.500l2.500-2.500" fill="none" stroke="#6c6c6c" stroke-width="1.100"/><rect x="164.500" y="1" width="29.500" height="15" fill="#585858"/><rect x="171.500" y="6" width="8.500" height="8" fill="#f2f2f2"/><rect x="168" y="2" width="8.500" height="8" fill="#3f8ae0"/><path d="M184 6.500l3 3l3-3" fill="none" stroke="#b0b0b0" stroke-width="1.200"/></svg>
<svg style="left:1080px;top:456.500px" width="194" height="15" viewBox="0 0 194 15"><g transform="translate(0.5 0)"><rect x="1.500" y="2" width="11" height="11" rx="1" fill="none" stroke="#a8a8a8" stroke-width="1.400"/><path d="M1.500 5.500h11M4.500 8.500h5" stroke="#a8a8a8" stroke-width="1.200"/></g><g transform="translate(65 0)"><path d="M11.500 8V2.500h-9v9h5" fill="none" stroke="#c2c2c2" stroke-width="1.400"/><circle cx="10.500" cy="11" r="2.300" fill="#c2c2c2"/></g><g transform="translate(81.5 0)"><rect x="2" y="2" width="9" height="9" fill="none" stroke="#c2c2c2" stroke-width="1.300" stroke-dasharray="2 1.200"/><rect x="4.500" y="6" width="4.500" height="3" fill="#c2c2c2"/><circle cx="11" cy="11.500" r="2.200" fill="#c2c2c2"/></g><g transform="translate(97.5 0)"><path d="M1.500 3h4l1.500 1.500h5.500v7h-11Z" fill="#c2c2c2"/><circle cx="11.500" cy="11.500" r="2.200" fill="#4a4a4a" stroke="#c2c2c2" stroke-width="1"/></g><g transform="translate(114.5 0)"><rect x="6" y="1.500" width="6.500" height="6" fill="none" stroke="#c2c2c2" stroke-width="1.300"/><path d="M2 12.500c0-4 1-5 4-5" fill="none" stroke="#c2c2c2" stroke-width="1.400"/><path d="M1 10l1.500 3l2.500-2" fill="none" stroke="#c2c2c2" stroke-width="1.100"/><rect x="8" y="3.500" width="2.500" height="2" fill="#c2c2c2"/></g><g transform="translate(130 0)"><rect x="6" y="1.500" width="6.500" height="6" fill="none" stroke="#c2c2c2" stroke-width="1.300"/><circle cx="4.500" cy="10.500" r="2.800" fill="none" stroke="#c2c2c2" stroke-width="1.400"/><path d="M6.500 8.500l3-3" stroke="#c2c2c2" stroke-width="1.400"/></g><g transform="translate(146 0)"><circle cx="7" cy="7.500" r="4.500" fill="none" stroke="#5e5e5e" stroke-width="2"/></g><g transform="translate(162 0)"><rect x="1.500" y="3" width="11" height="9" rx="1.500" fill="none" stroke="#d0d0d0" stroke-width="1.500"/><rect x="6" y="6" width="5" height="4" fill="#e0e0e0"/><path d="M3 2h4" stroke="#d0d0d0" stroke-width="1.200"/></g><g transform="translate(178 0)"><path d="M3 4.500h8l-.8 8.500H3.800Z" fill="none" stroke="#8a8a8a" stroke-width="1.300"/><path d="M2 4h10M5.500 2.500h3M5.500 6.500v4.500M8.500 6.500v4.500" stroke="#8a8a8a" stroke-width="1.100"/></g></svg>
<div style="left:1080px;top:474.500px;width:183px;height:151px;background:#414141"></div>
<div style="left:1263px;top:474.500px;width:11px;height:151px;background:#3a3a3a"></div>
<div style="left:1080px;top:625.500px;width:194px;height:23.500px;background:#3b3b3b"></div>
<div style="left:1112px;top:474.5px;width:151px;height:24.5px;background:#5c6788"></div>
<div style="left:1080px;top:498.5px;width:183px;height:1px;background:#333"></div><div style="left:1080px;top:523.75px;width:183px;height:1px;background:#333"></div><div style="left:1080px;top:549.0px;width:183px;height:1px;background:#333"></div><div style="left:1080px;top:574.25px;width:183px;height:1px;background:#333"></div><div style="left:1080px;top:599.75px;width:183px;height:1px;background:#333"></div><div style="left:1080px;top:625.0px;width:183px;height:1px;background:#333"></div>
<div style="left:1096px;top:474.500px;width:1px;height:151px;background:#343434"></div><div style="left:1112px;top:474.500px;width:1px;height:151px;background:#343434"></div>
<svg style="left:1081.500px;top:482.0px" width="14" height="10" viewBox="0 0 14 10"><path d="M.8 5.500C3 1.500 11 1.500 13.200 5.500C11 9 3 9 .8 5.500Z" fill="#cfcfcf"/><circle cx="7" cy="5" r="2.300" fill="#4a4a4a"/><circle cx="7" cy="5" r="1" fill="#dcdcdc"/></svg><svg style="left:1081.500px;top:506.5px" width="14" height="10" viewBox="0 0 14 10"><path d="M.8 5.500C3 1.500 11 1.500 13.200 5.500C11 9 3 9 .8 5.500Z" fill="#cfcfcf"/><circle cx="7" cy="5" r="2.300" fill="#4a4a4a"/><circle cx="7" cy="5" r="1" fill="#dcdcdc"/></svg><svg style="left:1081.500px;top:531.75px" width="14" height="10" viewBox="0 0 14 10"><path d="M.8 5.500C3 1.500 11 1.500 13.200 5.500C11 9 3 9 .8 5.500Z" fill="#cfcfcf"/><circle cx="7" cy="5" r="2.300" fill="#4a4a4a"/><circle cx="7" cy="5" r="1" fill="#dcdcdc"/></svg><svg style="left:1081.500px;top:582.25px" width="14" height="10" viewBox="0 0 14 10"><path d="M.8 5.500C3 1.500 11 1.500 13.200 5.500C11 9 3 9 .8 5.500Z" fill="#cfcfcf"/><circle cx="7" cy="5" r="2.300" fill="#4a4a4a"/><circle cx="7" cy="5" r="1" fill="#dcdcdc"/></svg><svg style="left:1081.500px;top:607.75px" width="14" height="10" viewBox="0 0 14 10"><path d="M.8 5.500C3 1.500 11 1.500 13.200 5.500C11 9 3 9 .8 5.500Z" fill="#cfcfcf"/><circle cx="7" cy="5" r="2.300" fill="#4a4a4a"/><circle cx="7" cy="5" r="1" fill="#dcdcdc"/></svg>
<div style="left:1099.500px;top:506px;width:9px;height:10px;border:1px solid #4c4c4c"></div><div style="left:1099.500px;top:531.25px;width:9px;height:10px;border:1px solid #4c4c4c"></div><div style="left:1099.500px;top:556.5px;width:9px;height:10px;border:1px solid #4c4c4c"></div><div style="left:1099.500px;top:581.75px;width:9px;height:10px;border:1px solid #4c4c4c"></div><div style="left:1099.500px;top:607.25px;width:9px;height:10px;border:1px solid #4c4c4c"></div><div style="left:1083.500px;top:556.5px;width:9px;height:10px;border:1px solid #4c4c4c"></div>
<svg style="left:1097.500px;top:478.5px" width="13" height="15" viewBox="0 0 13 15"><path d="M2 11L9.500 2.500L11.500 4.500L4 12.500L1.500 13.500Z" fill="#d8d8d8"/><path d="M1 14.500h10" stroke="#bdbdbd" stroke-width="1"/></svg>
<div style="left:1115.500px;top:476.5px;width:17.500px;height:20.500px;background:#f4f4f4;border:1px solid #fff;outline:1px solid #3a3f55"></div><div style="left:1118px;top:479.0px;width:12.500px;height:15.500px;background:linear-gradient(180deg,#f3d9c4 0,#e8a878 30%,#b8641f 45%,#b05d1e 85%,#f0e0d0 86%)"></div><div style="left:1144px;top:478.0px;width:14px;height:18px;background:#050505"></div><div style="left:1144px;top:488.0px;width:14px;height:4px;background:#f2f2f2"></div>
<div style="left:1118px;top:502.5px;width:13px;height:18px;background:linear-gradient(180deg,#f2ece8 0,#f2ece8 42%,#c07a35 44%,#b2601f 60%,#b2601f 100%)"></div><div style="left:1144px;top:502.5px;width:14px;height:18px;background:#050505"></div><div style="left:1150px;top:516px;width:8px;height:3px;background:#f2f2f2"></div>
<div style="left:1118px;top:527.75px;width:13px;height:18px;background-color:#f0f0f0;background-image:linear-gradient(45deg,#cfcfcf 25%,transparent 25%,transparent 75%,#cfcfcf 75%),linear-gradient(45deg,#cfcfcf 25%,transparent 25%,transparent 75%,#cfcfcf 75%);background-size:4px 4px;background-position:0 0,2px 2px"></div><svg style="left:1141.500px;top:527.25px" width="15" height="16" viewBox="0 0 15 16"><rect x="1" y="1" width="13" height="14" rx="1" fill="#e4e4e4"/><rect x="3" y="3.500" width="9" height="9" fill="none" stroke="#444" stroke-width="1.200"/><circle cx="7.500" cy="8" r="2.200" fill="none" stroke="#444" stroke-width="1.100"/></svg>
<div style="left:1118px;top:553.0px;width:13px;height:18px;background:#f1f1f1"></div><div style="left:1122px;top:557.5px;width:5px;height:9px;background:#c4c4c4"></div>
<div style="left:1118px;top:578.25px;width:13px;height:18px;background-color:#f0f0f0;background-image:linear-gradient(45deg,#cfcfcf 25%,transparent 25%,transparent 75%,#cfcfcf 75%),linear-gradient(45deg,#cfcfcf 25%,transparent 25%,transparent 75%,#cfcfcf 75%);background-size:4px 4px;background-position:0 0,2px 2px"></div>
<div style="left:1118px;top:603.75px;width:13px;height:18px;background:#fafafa"></div><svg style="left:1141.500px;top:602.75px" width="15" height="16" viewBox="0 0 15 16"><rect x="1" y="1" width="13" height="14" rx="1.500" fill="#ececec"/><rect x="3.500" y="3.500" width="8" height="8.500" fill="none" stroke="#3c3c3c" stroke-width="1.200"/><path d="M3.500 12l3-3v3Z" fill="#3c3c3c"/></svg>
<div class="t" style="left:1165px;top:477.0px;font-size:9px;line-height:11px;letter-spacing:-0.500px;color:#dfe3f0;">100 % Normal</div><div class="t" style="left:1165px;top:486.5px;font-size:9px;line-height:11px;letter-spacing:-0.500px;color:#dfe3f0;">bp2b Copy</div><div class="t" style="left:1165px;top:501.5px;font-size:9px;line-height:11px;letter-spacing:-0.500px;color:#c9c9c9;">100 % Normal</div><div class="t" style="left:1165px;top:511px;font-size:9px;line-height:11px;letter-spacing:-0.500px;color:#c9c9c9;">bp2c Copy</div><div class="t" style="left:1159px;top:526.75px;font-size:9px;line-height:11px;letter-spacing:-0.500px;color:#c9c9c9;">100 % Normal</div><div class="t" style="left:1159px;top:536.25px;font-size:9px;line-height:11px;letter-spacing:-0.500px;color:#c9c9c9;">Layer 2</div><div class="t" style="left:1138px;top:552.0px;font-size:9px;line-height:11px;letter-spacing:-0.500px;color:#c9c9c9;">72 % Normal</div><div class="t" style="left:1138px;top:561.5px;font-size:9px;line-height:11px;letter-spacing:-0.500px;color:#c9c9c9;font-size:7.500px;letter-spacing:-0.620px">22D47B14-7A8C-41F7-B867-DBA9A8B51</div><div class="t" style="left:1138px;top:577.25px;font-size:9px;line-height:11px;letter-spacing:-0.500px;color:#c9c9c9;">100 % Normal</div><div class="t" style="left:1138px;top:586.75px;font-size:9px;line-height:11px;letter-spacing:-0.500px;color:#c9c9c9;">Layer 1</div><div class="t" style="left:1159px;top:612.75px;font-size:9px;line-height:11px;letter-spacing:-0.500px;color:#c9c9c9;">Paper</div>
</div>

<!-- menu.html -->
<div class="a" id="menu">
<div style="left:277.5px;top:107.5px;width:245px;height:526px;background:#2e2e2e"></div>
<div style="left:277.5px;top:107.5px;width:244px;height:525px;background:#4c4c4c"></div>
<div class="t" style="left:307px;top:112.1px;font-size:10.2px;line-height:14px;color:#e0e0e0;letter-spacing:-0.28px">Undo</div><div class="t" style="right:789px;top:112.1px;font-size:10.2px;line-height:14px;color:#e0e0e0;letter-spacing:-0.1px">Ctrl+Z</div>
<div class="t" style="left:307px;top:129.8px;font-size:10.2px;line-height:14px;color:#e0e0e0;letter-spacing:-0.28px">Redo</div><div class="t" style="right:789px;top:129.8px;font-size:10.2px;line-height:14px;color:#e0e0e0;letter-spacing:-0.1px">Ctrl+Y</div>
<div style="left:306px;top:146.6px;width:214px;height:1px;background:#5e5e5e"></div>
<div class="t" style="left:307px;top:151.7px;font-size:10.2px;line-height:14px;color:#e0e0e0;letter-spacing:-0.28px">Cut</div><div class="t" style="right:789px;top:151.7px;font-size:10.2px;line-height:14px;color:#e0e0e0;letter-spacing:-0.1px">Ctrl+X</div>
<div class="t" style="left:307px;top:169.4px;font-size:10.2px;line-height:14px;color:#e0e0e0;letter-spacing:-0.28px">Copy</div><div class="t" style="right:789px;top:169.4px;font-size:10.2px;line-height:14px;color:#e0e0e0;letter-spacing:-0.1px">Ctrl+C</div>
<div class="t" style="left:307px;top:187.1px;font-size:10.2px;line-height:14px;color:#818181;letter-spacing:-0.28px">Copy vectors as SVG(K)</div>
<div class="t" style="left:307px;top:204.8px;font-size:10.2px;line-height:14px;color:#e0e0e0;letter-spacing:-0.28px">Paste</div><div class="t" style="right:789px;top:204.8px;font-size:10.2px;line-height:14px;color:#e0e0e0;letter-spacing:-0.1px">Ctrl+V</div>
<div class="t" style="left:307px;top:222.5px;font-size:10.2px;line-height:14px;color:#e0e0e0;letter-spacing:-0.28px">Paste to shown position</div><div class="t" style="right:789px;top:222.5px;font-size:10.2px;line-height:14px;color:#e0e0e0;letter-spacing:-0.1px">Ctrl+Shift+V</div>
<div style="left:306px;top:239.3px;width:214px;height:1px;background:#5e5e5e"></div>
<div class="t" style="left:307px;top:244.4px;font-size:10.2px;line-height:14px;color:#e0e0e0;letter-spacing:-0.28px">Delete</div><div class="t" style="right:789px;top:244.4px;font-size:10.2px;line-height:14px;color:#e0e0e0;letter-spacing:-0.1px">Del</div>
<div class="t" style="left:307px;top:262.1px;font-size:10.2px;line-height:14px;color:#818181;letter-spacing:-0.28px">Delete Outside Selection</div><div class="t" style="right:789px;top:262.1px;font-size:10.2px;line-height:14px;color:#818181;letter-spacing:-0.1px">Shift+Del</div>
<div class="t" style="left:307px;top:279.8px;font-size:10.2px;line-height:14px;color:#e0e0e0;letter-spacing:-0.28px">Smart Smoothing<span style="position:static;letter-spacing:-1.1px">...</span></div>
<div class="t" style="left:307px;top:297.5px;font-size:10.2px;line-height:14px;color:#e0e0e0;letter-spacing:-0.28px">Remove tones (Technology preview)</div><svg style="left:511.5px;top:299.8px" width="6" height="8" viewBox="0 0 6 8"><path d="M1 .8L4.600 4L1 7.200" fill="none" stroke="#d6d6d6" stroke-width="1.300"/></svg>
<div class="t" style="left:307px;top:315.2px;font-size:10.2px;line-height:14px;color:#e0e0e0;letter-spacing:-0.28px">Fill</div><div class="t" style="right:789px;top:315.2px;font-size:10.2px;line-height:14px;color:#e0e0e0;letter-spacing:-0.1px">Alt+Del</div>
<div class="t" style="left:307px;top:332.9px;font-size:10.2px;line-height:14px;color:#e0e0e0;letter-spacing:-0.28px">Advanced Fill<span style="position:static;letter-spacing:-1.1px">...</span></div>
<div class="t" style="left:307px;top:350.6px;font-size:10.2px;line-height:14px;color:#e0e0e0;letter-spacing:-0.28px">Colorize (Technology preview)</div><svg style="left:511.5px;top:352.9px" width="6" height="8" viewBox="0 0 6 8"><path d="M1 .8L4.600 4L1 7.200" fill="none" stroke="#d6d6d6" stroke-width="1.300"/></svg>
<div class="t" style="left:307px;top:368.3px;font-size:10.2px;line-height:14px;color:#e0e0e0;letter-spacing:-0.28px">Convert to drawing color(H)</div>
<div class="t" style="left:307px;top:386.0px;font-size:10.2px;line-height:14px;color:#818181;letter-spacing:-0.28px">Outline Selection(G)<span style="position:static;letter-spacing:-1.1px">...</span></div>
<div class="t" style="left:307px;top:403.7px;font-size:10.2px;line-height:14px;color:#e0e0e0;letter-spacing:-0.28px">Convert brightness to opacity</div>
<div style="left:306px;top:420.5px;width:214px;height:1px;background:#5e5e5e"></div>
<div class="t" style="left:307px;top:425.6px;font-size:10.2px;line-height:14px;color:#e0e0e0;letter-spacing:-0.28px">Register Material(I)</div><svg style="left:511.5px;top:427.9px" width="6" height="8" viewBox="0 0 6 8"><path d="M1 .8L4.600 4L1 7.200" fill="none" stroke="#d6d6d6" stroke-width="1.300"/></svg>
<div class="t" style="left:307px;top:443.3px;font-size:10.2px;line-height:14px;color:#e0e0e0;letter-spacing:-0.28px">Tonal Correction(D)</div><svg style="left:511.5px;top:445.6px" width="6" height="8" viewBox="0 0 6 8"><path d="M1 .8L4.600 4L1 7.200" fill="none" stroke="#d6d6d6" stroke-width="1.300"/></svg>
<div class="t" style="left:307px;top:461.0px;font-size:10.2px;line-height:14px;color:#e0e0e0;letter-spacing:-0.28px">Transform</div><svg style="left:511.5px;top:463.3px" width="6" height="8" viewBox="0 0 6 8"><path d="M1 .8L4.600 4L1 7.200" fill="none" stroke="#d6d6d6" stroke-width="1.300"/></svg>
<div style="left:306px;top:477.8px;width:214px;height:1px;background:#5e5e5e"></div>
<div class="t" style="left:307px;top:482.9px;font-size:10.2px;line-height:14px;color:#e0e0e0;letter-spacing:-0.28px">Change Image Resolution<span style="position:static;letter-spacing:-1.1px">...</span></div>
<div class="t" style="left:307px;top:500.6px;font-size:10.2px;line-height:14px;color:#e0e0e0;letter-spacing:-0.28px">Change Canvas Size<span style="position:static;letter-spacing:-1.1px">...</span></div>
<div class="t" style="left:307px;top:518.3px;font-size:10.2px;line-height:14px;color:#818181;letter-spacing:-0.28px">Crop(T)</div>
<div class="t" style="left:307px;top:536.0px;font-size:10.2px;line-height:14px;color:#e0e0e0;letter-spacing:-0.28px">Rotate/Flip canvas</div><svg style="left:511.5px;top:538.3px" width="6" height="8" viewBox="0 0 6 8"><path d="M1 .8L4.600 4L1 7.200" fill="none" stroke="#d6d6d6" stroke-width="1.300"/></svg>
<div class="t" style="left:307px;top:553.7px;font-size:10.2px;line-height:14px;color:#e0e0e0;letter-spacing:-0.28px">Canvas Properties<span style="position:static;letter-spacing:-1.1px">...</span></div>
<div style="left:306px;top:570.5px;width:214px;height:1px;background:#5e5e5e"></div>
<div class="t" style="left:307px;top:575.6px;font-size:10.2px;line-height:14px;color:#e0e0e0;letter-spacing:-0.28px">Clear Memory</div><svg style="left:511.5px;top:577.9px" width="6" height="8" viewBox="0 0 6 8"><path d="M1 .8L4.600 4L1 7.200" fill="none" stroke="#d6d6d6" stroke-width="1.300"/></svg>
<div style="left:306px;top:592.4px;width:214px;height:1px;background:#5e5e5e"></div>
<div class="t" style="left:307px;top:597.6px;font-size:10.2px;line-height:14px;color:#e0e0e0;letter-spacing:-0.28px">Pick screen color(X)<span style="position:static;letter-spacing:-1.1px">...</span></div>
<div class="t" style="left:307px;top:615.3px;font-size:10.2px;line-height:14px;color:#e0e0e0;letter-spacing:-0.28px">Hide windows and pick screen color(Y)<span style="position:static;letter-spacing:-1.1px">...</span></div>
<svg style="left:326px;top:523px" width="12" height="18" viewBox="0 0 12 18"><path d="M1 1v13l3-2.800l2.200 5l2.200-1l-2.200-4.800h4.300Z" fill="#fff" stroke="#222" stroke-width=".9"/></svg>
</div>

<!-- cam.html -->
<div class="a" id="cam">
<div style="left:6px;top:274px;width:231px;height:172px;overflow:hidden;background:#bdb8ae">
<svg style="left:0;top:0;filter:blur(0.9px)" width="231" height="172" viewBox="0 0 231 172">
 <defs>
  <linearGradient id="cg" x1="0" y1="0" x2="1" y2="0"><stop offset="0" stop-color="#c1c0bb"/><stop offset=".12" stop-color="#bcbab3"/><stop offset=".23" stop-color="#b6ae9e"/><stop offset=".5" stop-color="#b3ab9a"/><stop offset=".75" stop-color="#afa796"/><stop offset="1" stop-color="#aaa294"/></linearGradient>
  <linearGradient id="cv" x1="0" y1="0" x2="0" y2="1"><stop offset="0" stop-color="#e0e0dc" stop-opacity=".7"/><stop offset=".04" stop-color="#d0d0cc" stop-opacity=".1"/><stop offset=".88" stop-color="#8a8376" stop-opacity="0"/><stop offset="1" stop-color="#8a8376" stop-opacity=".45"/></linearGradient>
  <linearGradient id="hood" x1="0" y1="0" x2="1" y2="1"><stop offset="0" stop-color="#c3cddd"/><stop offset=".5" stop-color="#b4c0d3"/><stop offset="1" stop-color="#a9b6cb"/></linearGradient>
  <linearGradient id="door" x1="0" y1="0" x2="0" y2="1"><stop offset="0" stop-color="#a4abb0"/><stop offset=".35" stop-color="#959ca3"/><stop offset="1" stop-color="#8b9299"/></linearGradient>
 </defs>
 <rect x="0" y="0" width="231" height="68" fill="url(#cg)"/>
 <rect x="0" y="0" width="231" height="68" fill="url(#cv)"/>
 <!-- wall band -->
 <rect x="0" y="66.500" width="190" height="6" fill="#c7caca"/>
 <rect x="0" y="66" width="70" height="16.500" fill="#d3d7d6"/>
 <!-- doorway -->
 <rect x="0" y="83" width="61" height="59" fill="url(#door)"/>
 <rect x="42" y="109" width="17" height="33" fill="#646c76"/>
 <rect x="5" y="117" width="31" height="25" fill="#d9d2c3"/>
 <rect x="8" y="119" width="22" height="23" fill="#e6dfcf"/>
 <rect x="60" y="70" width="9" height="102" fill="#e4e7ea"/>
 <!-- wall right of shelf -->
 <rect x="155" y="73" width="40" height="99" fill="#6c5f59"/>
 <!-- bookshelf -->
 <path d="M68.500 72H156l4 100H66Z" fill="#b3874c"/>
 <path d="M74.500 78H110V172H73Z" fill="#4a3629"/>
 <path d="M116.500 78H150.500L154 172H116.500Z" fill="#3f2f26"/>
 <!-- shelves left col -->
 <rect x="73" y="110" width="38" height="4" fill="#bf9258"/>
 <rect x="72.500" y="140" width="39" height="4" fill="#bf9258"/>
 <!-- shelves right col -->
 <rect x="116" y="94.500" width="36" height="4" fill="#bf9258"/>
 <rect x="116" y="119.500" width="37" height="4" fill="#bf9258"/>
 <rect x="116" y="153.500" width="38" height="4" fill="#bf9258"/>
 <!-- books left col -->
 <g>
  <rect x="76" y="100" width="8" height="10" fill="#3a3340"/>
  <path d="M83 97h3v13h-3ZM87.500 96h2.500v14h-2.500ZM91.500 95h3v15h-3ZM96 94h2.500v16h-2.500Z" fill="#8d8a86"/>
  <path d="M99 92l4-1.500l6 17l-4 1.500ZM104 91l3.500-1l5 15l-3.500 1Z" fill="#d8d6cf"/>
  <rect x="76" y="120" width="5" height="20" fill="#d9d6cc"/>
  <rect x="82" y="126" width="3" height="14" fill="#6e6a60"/>
  <rect x="85" y="125" width="11" height="15" fill="#d3b548"/>
  <path d="M97 126h3v14h-3ZM101 124h3v16h-3ZM105 122l3-.5l3 18l-3 .5Z" fill="#bdbab0"/>
  <path d="M76 158h4v14h-4ZM81 156h3v16h-3ZM86 154h4v18h-4ZM92 153h3v19h-3ZM97 151l3-.5l3 21h-4Z" fill="#c9c7be"/>
  <path d="M80 158h1.500v14H80ZM84.500 156h1.500v16h-1.500ZM90 154h2v18h-2Z" fill="#4e5a4a"/>
  <rect x="66" y="163" width="12" height="9" fill="#e9e7e2"/>
 </g>
 <!-- books right col -->
 <g>
  <path d="M118 80h3v14h-3ZM122 81l3-.5l4 14h-3.500ZM128 80l2.500-.5l4 15h-3ZM134 80h3v14.500h-3ZM139 80h3v14.500h-3ZM144 81h3.500v13.500h-3.500Z" fill="#6e6a63"/>
  <path d="M126 80l2-.5l4 15h-2ZM137.500 80h1.500v14.500h-1.500ZM142.500 81h1.500v13.500h-1.500Z" fill="#c9c4b8"/>
  <path d="M131.500 80l2-.3l3 14.800h-2Z" fill="#8a3a34"/>
  <path d="M118 101h2.500v18.500H118ZM121.500 103h2v16.500h-2ZM124.500 104h2.500v15.500h-2.500Z" fill="#7b7670"/>
  <rect x="121" y="111" width="12" height="8" fill="#e6e3df"/>
  <rect x="135" y="108.500" width="14" height="10.500" fill="#8e4650"/>
  <path d="M134 106l16-4v4l-15 3Z" fill="#d9d4c8"/>
  <path d="M118 129l24 3v3l-24-2Z" fill="#8c8576"/>
  <path d="M120 134h2.500v19.500H120ZM124 135h2v18.500h-2ZM127.500 134h2.500v19.500h-2.500ZM131.500 135h2v18.500h-2ZM135 134l2.500-.5l3 19.500h-3ZM141 133l2.500-.5l3.500 19h-3Z" fill="#68705f"/>
  <path d="M122.500 134h1v19.500h-1ZM130 134h1v19.500h-1ZM138.500 134l1.500-.3l3 19.300h-1.500Z" fill="#b9b6a8"/>
 </g>
 <!-- hood -->
 <path d="M231 51L214 52L201.500 54.750L194 58L189 62L184.500 68.500L181.500 76L179.600 86L178.800 94L177.800 104L176.900 113.700L175 119L172 123.400L166 133L156 138.500L146.700 142.900L131.200 152.600L122.500 162.300L117.600 172H231Z" fill="url(#hood)" stroke="url(#hood)" stroke-width="1" stroke-linejoin="round"/>
 <path d="M184 92C186 80 192 68 204 60" fill="none" stroke="#cfd9e8" stroke-width="6" opacity=".5"/>
 <path d="M170 132C158 138 140 148 126 164" fill="none" stroke="#d4deeb" stroke-width="5" opacity=".55"/>
 <path d="M231 76C220 92 211 108 206.500 122C203 134 199 146 195.500 154" fill="none" stroke="#97a6c6" stroke-width="1.600" opacity=".85"/>
 <path d="M228 78C216 96 208 110 203 126" fill="none" stroke="#d2dbea" stroke-width="3" opacity=".45"/>
 <!-- face -->
 <path d="M231 100L219 111L212 131L205 148L196 162L197 172H231Z" fill="#5b4852"/>
 <path d="M231 108L222 116L217 134L221 146L231 148Z" fill="#7c626b"/>
 <path d="M231 146L219 144L209 150L202 160L231 160Z" fill="#2a2229"/>
 <path d="M196 160L231 157V172H197Z" fill="#16161b"/>
 <path d="M209.500 158l9.500 14" stroke="#9aa2b2" stroke-width="1.300"/>
 <rect x="227" y="102" width="4" height="4" fill="#2a2630"/>
 <rect x="227.500" y="0" width="3.500" height="50" fill="#c9c6bf" opacity=".55"/>
</svg>
<div style="left:0;top:142.500px;width:62.500px;height:30px;background:#2c3043;border-top-right-radius:4px"></div>
<div class="t" style="left:8px;top:150px;font-size:12.600px;line-height:16px;font-weight:bold;color:#f2f2f4;letter-spacing:-0.250px">Narwhal</div>
</div>
</div>

</body></html>
